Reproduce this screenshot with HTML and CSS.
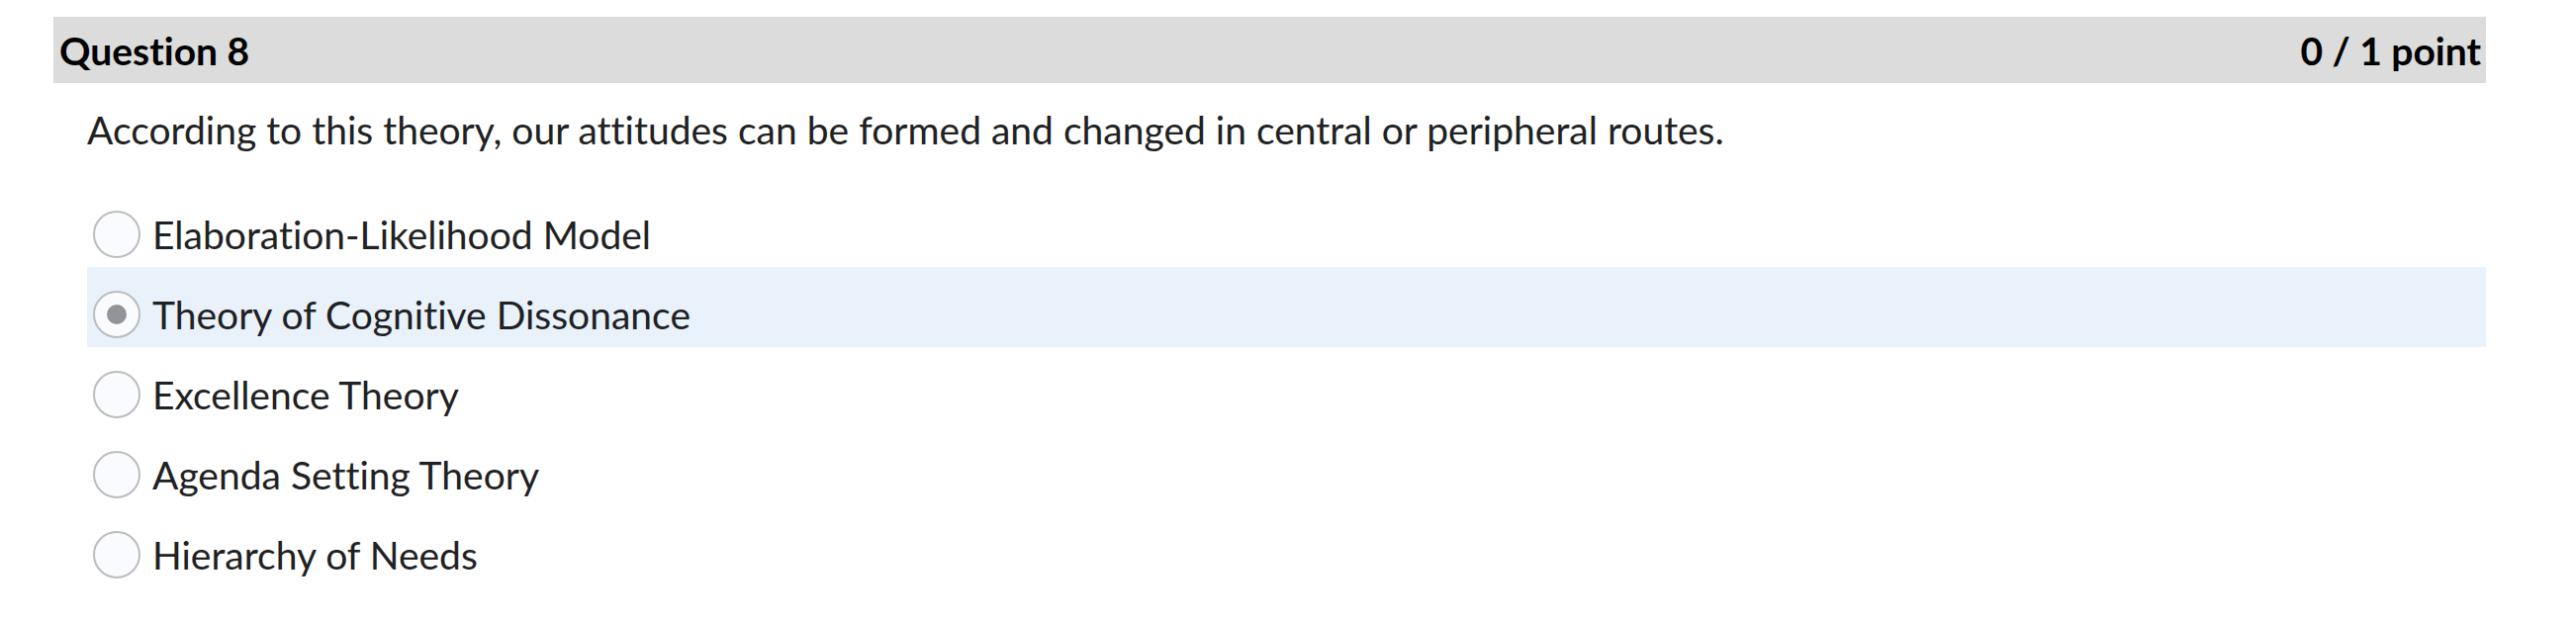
FILE: index.html
```html
<!DOCTYPE html>
<html lang="en">
<head>
<meta charset="utf-8">
<title>Question 8</title>
<link rel="stylesheet" href="styles.css">
</head>
<body>
<div class="page">
  <div class="q-header">
    <span class="q-title">Question 8</span>
    <span class="q-score">0 / 1 point</span>
  </div>
  <div class="q-body">
    <p class="q-text">According to this theory, our attitudes can be formed and changed in central or peripheral routes.</p>
    <ul class="options">
      <li class="option"><span class="radio"></span><span class="label">Elaboration-Likelihood Model</span></li>
      <li class="option selected"><span class="radio checked"></span><span class="label">Theory of Cognitive Dissonance</span></li>
      <li class="option"><span class="radio"></span><span class="label">Excellence Theory</span></li>
      <li class="option"><span class="radio"></span><span class="label">Agenda Setting Theory</span></li>
      <li class="option"><span class="radio"></span><span class="label">Hierarchy of Needs</span></li>
    </ul>
  </div>
</div>
</body>
</html>
```
FILE: styles.css
```css
html, body {
  margin: 0;
  padding: 0;
  background: #ffffff;
}
body {
  font-family: Lato, "Open Sans", "Liberation Sans", sans-serif;
  color: #202122;
  font-variant-ligatures: none;
  font-feature-settings: "liga" 0, "clig" 0;
}
.page {
  padding: 17px 91px 0 54px;
}
.q-header {
  display: flex;
  justify-content: space-between;
  align-items: center;
  height: 67px;
  background: #dcdcdc;
  padding: 0 5px 0 6px;
  box-sizing: border-box;
  font-weight: 700;
  font-size: 39px;
  color: #000;
}
.q-body {
  padding-left: 34px;
}
.q-text {
  margin: 0;
  height: 105px;
  padding-top: 17px;
  box-sizing: border-box;
  font-size: 39px;
  line-height: 60px;
}
.options {
  list-style: none;
  margin: 0;
  padding: 0;
}
.option {
  display: flex;
  align-items: center;
  gap: 12px;
  height: 81px;
  padding: 14px 0 0 6px;
  box-sizing: border-box;
  font-size: 39px;
}
.option.selected {
  background: #e9f1fb;
}
.radio {
  width: 48px;
  height: 48px;
  box-sizing: border-box;
  border: 2px solid #bcbcbc;
  border-radius: 50%;
  background: #f9fbfe;
  display: flex;
  align-items: center;
  justify-content: center;
  flex: none;
}
.radio.checked::after {
  content: "";
  width: 20px;
  height: 20px;
  border-radius: 50%;
  background: #929497;
}
```
